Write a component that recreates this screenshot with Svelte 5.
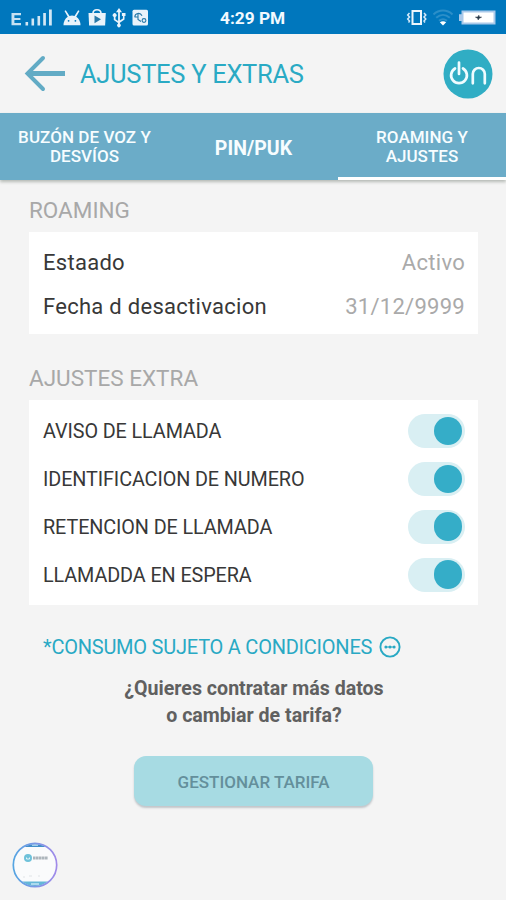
<script>
  const status = [
    { label: 'Estaado', value: 'Activo' },
    { label: 'Fecha d desactivacion', value: '31/12/9999' }
  ];
  let extras = $state([
    { label: 'AVISO DE LLAMADA', on: true },
    { label: 'IDENTIFICACION DE NUMERO', on: true },
    { label: 'RETENCION DE LLAMADA', on: true },
    { label: 'LLAMADDA EN ESPERA', on: true }
  ]);
</script>

<div class="screen">
  <div class="status">
    <svg class="left" width="160" height="34" viewBox="0 0 160 34" fill="#e9f3fb">
      <path d="M12 13h9v2.3h-6.6v2.7h6v2.1h-6v2.9H21v2.2h-9.500v-12.200z" opacity=".85" />
      <path d="M25.500 22h2.600v3.500h-2.600zM31.500 18.500h2.600v7h-2.600zM37.500 16h2.600v9.500h-2.600zM43.200 13h2.700v12.500h-2.700zM49 9.500h2.800v16H49z" opacity=".9" />
      <path d="M63.500 25.200a8.300 10 0 0 1 4.300-8.400L64.500 11l1.300-.7 3.700 5.600a8 8 0 0 1 5 0l3.700-5.600 1.300.7-3.300 5.800a8.300 10 0 0 1 4.300 8.400z" />
      <circle cx="68.600" cy="20.800" r=".9" fill="#0077bd" /><circle cx="75.400" cy="20.800" r=".9" fill="#0077bd" />
      <path d="M88.500 13h17.300l-.7 12.500h-16z" />
      <path d="M93 13.500c0-5 8-5 8 0" fill="none" stroke="#e9f3fb" stroke-width="1.600" />
      <path d="M94.500 15.500l6.500 3.700-6.500 4z" fill="#2778a8" />
      <path d="M119 8l3 4.300h-2.100v8.200l3-2v-2.400h-1V13h3.600v3.100h-1v3.500l-4.600 3.100v1a1.900 1.900 0 1 1-1.900 0v-.7l-4.200-2.900v-3.200a1.900 1.900 0 1 1 1.700 0v2.300l2.600 1.800v-8.700H116z" />
      <rect x="132.500" y="9.800" width="15.500" height="15.600" rx="1.500" />
      <g fill="none" stroke="#2778a8" stroke-width="1.100">
        <path d="M134.800 17c0-4 5.400-5 7.200-1.200M134.500 17h3M138 14v5.500l3 2" />
        <circle cx="144" cy="20.500" r="1.900" />
      </g>
    </svg>
    <span class="time"><span>4:29 PM</span></span>
    <svg class="right" width="106" height="34" viewBox="400 0 106 34" fill="none">
      <rect x="412.500" y="11" width="8.500" height="13" stroke="#edf6fc" stroke-width="2" />
      <path d="M409.500 13l-1.800 2 1.800 2-1.800 2 1.800 2-1 1.500M424 13l1.800 2-1.800 2 1.800 2-1.800 2 1 1.500" stroke="#d5eafa" stroke-width="1.500" />
      <g stroke="#2b8fc9" stroke-width="2">
        <path d="M433.500 14.500c5.500-5.200 13.500-5.200 19 0M436.200 17.700c4.200-3.700 9.400-3.700 13.600 0M439 20.800c2.600-2 5.400-2 8 0" />
      </g>
      <path d="M439.800 22.300c1.800-1.300 4.600-1.300 6.400 0L443 25.500z" fill="#fff" />
      <path d="M461.500 10.500H495.500v14h-34V21H459v-6.800h2.500z" fill="#aac9ea" />
      <path d="M463.500 12.500h30v10h-30z" fill="#fff" />
      <path d="M475.500 17.200l2.500-.2.800-1.700.5 1.700 2.200.2-2.500 1.100-.8 1.600-.5-1.700z" fill="#263646" stroke="#263646" stroke-width=".6" />
    </svg>
  </div>

  <header>
    <svg class="back" width="44" height="40" viewBox="0 0 44 40" fill="none" stroke="#62abc5" stroke-linecap="round">
      <path d="M21 4L5.500 19.500 21 35" stroke-width="4" />
      <path d="M5.500 19.500h37.500" stroke-width="5" stroke-linecap="butt" />
    </svg>
    <h1><span>AJUSTES Y EXTRAS</span></h1>
    <svg class="logo" width="50" height="50" viewBox="0 0 50 50">
      <circle cx="25" cy="25" r="24.500" fill="#30adc4" />
      <g fill="none" stroke="#effcff" stroke-width="2.700" stroke-linecap="round">
        <path d="M12 19.500a7.900 7.900 0 1 0 8 0M16 13.500v11.500" />
        <path d="M29.800 34.300v-9.300a6 6 0 0 1 12 0v9.300" />
      </g>
    </svg>
  </header>

  <nav>
    <button><span>BUZÓN DE VOZ Y<br />DESVÍOS</span></button>
    <button class="big"><span>PIN/PUK</span></button>
    <button class="active"><span>ROAMING Y<br />AJUSTES</span></button>
  </nav>

  <main>
    <h2><span>ROAMING</span></h2>
    <section class="card info">
      {#each status as row}
        <div class="row"><span class="label">{row.label}</span><span class="value">{row.value}</span></div>
      {/each}
    </section>

    <h2 class="second"><span>AJUSTES EXTRA</span></h2>
    <section class="card extras">
      {#each extras as row}
        <div class="row">
          <span class="label">{row.label}</span>
          <button class="toggle" class:off={!row.on} role="switch" aria-checked={row.on} aria-label={row.label} onclick={() => (row.on = !row.on)}><i></i></button>
        </div>
      {/each}
    </section>

    <div class="terms">
      <span>*CONSUMO SUJETO A CONDICIONES</span>
      <svg width="22" height="22" viewBox="0 0 22 22" fill="#29a9c4">
        <circle cx="11" cy="11" r="9.600" fill="none" stroke="#29a9c4" stroke-width="1.900" />
        <circle cx="6.900" cy="11" r="1.500" /><circle cx="11" cy="11" r="1.500" /><circle cx="15.100" cy="11" r="1.500" />
        <path d="M7 10.500h8v1H7z" />
      </svg>
    </div>
    <p>¿Quieres contratar más datos<br />o cambiar de tarifa?</p>
    <button class="cta"><span>GESTIONAR TARIFA</span></button>
  </main>

  <svg class="bubble" width="48" height="48" viewBox="0 0 48 48">
    <defs>
      <linearGradient id="ring"><stop offset="0" stop-color="#55a5e2" /><stop offset="1" stop-color="#a18ae9" /></linearGradient>
      <clipPath id="disc"><circle cx="24" cy="24" r="21" /></clipPath>
    </defs>
    <circle cx="24" cy="24" r="21.500" fill="#fafbfc" />
    <g clip-path="url(#disc)">
      <path d="M0 0h48v6H0z" fill="#438fca" />
      <path d="M0 40.500h48V48H0z" fill="#64b8d8" />
      <path d="M21 4h6M20 43h8" stroke="#c4e5f4" stroke-width="1.500" />
    </g>
    <circle cx="17" cy="17" r="4" fill="#6fc2da" />
    <path d="M15.500 16.500v1.500h3v-1.500" fill="none" stroke="#e4f7fb" />
    <path d="M22 17h15" stroke="#adb6bc" stroke-width="2.800" stroke-dasharray="2.500 .4" />
    <path d="M12 36h2M18 35h3M27 35h2" stroke="#e0e4e7" />
    <circle cx="24" cy="24" r="21.700" fill="none" stroke="url(#ring)" stroke-width="1.700" />
  </svg>
</div>

<style>
  :global(body) { margin: 0; background: #f4f4f4; }
  .screen { position: relative; width: 506px; height: 900px; overflow: hidden; background: #f4f4f4; font-family: Roboto, "Liberation Sans", sans-serif; display: flex; flex-direction: column; }
  .screen * { box-sizing: border-box; }
  button { border: 0; padding: 0; font: inherit; color: inherit; }
  h1, h2, p { margin: 0; font-weight: 400; }
  span { white-space: nowrap; }
  .status { height: 34px; flex: none; background: #0077bd; display: grid; grid-template-columns: 160px 240px 106px; }
  .time { color: #f2faff; font-size: 17.3px; font-weight: 700; line-height: 37px; padding-left: 60px; }
  header { height: 79px; flex: none; display: flex; align-items: center; padding: 0 13px 0 22px; }
  .back { margin-right: 14px; }
  h1 { flex: 1; font-size: 25.5px; letter-spacing: -.3px; line-height: 30px; padding-top: 1px; color: #2aaac4; }
  nav { height: 67px; flex: none; display: grid; grid-template-columns: 169px 169px 168px; background: #6bacc8; box-shadow: 0 2px 3px #b5bab5; }
  nav button { background: none; color: #f7fdff; font-size: 17px; line-height: 19px; font-weight: 500; letter-spacing: .05px; border-bottom: 3px solid transparent; padding-top: 4px; }
  nav .big { font-size: 19.5px; font-weight: 700; padding-top: 6px; }
  nav .active { border-bottom-color: #fff; }
  main { padding: 0 28px 0 29px; display: flex; flex-direction: column; }
  h2 { height: 52px; padding-top: 17px; line-height: 27px; font-size: 22.5px; color: #a8a8a8; }
  .second { height: 66px; padding-top: 31px; }
  .card { background: #fff; padding: 0 13px 0 14px; }
  .info { height: 102px; padding-top: 8px; }
  .info .row { height: 44px; font-size: 22px; letter-spacing: .28px; }
  .row { display: flex; align-items: center; justify-content: space-between; color: #383838; }
  .value { color: #aaa; }
  .extras { height: 205px; padding-top: 7px; }
  .extras .row { height: 47.900px; font-size: 19.8px; letter-spacing: -.1px; }
  .extras .label { padding-top: 2px; }
  .toggle { width: 57px; height: 34px; border-radius: 17px; background: #d9eff3; display: flex; justify-content: flex-end; align-items: center; padding-right: 3px; }
  .toggle.off { justify-content: flex-start; padding-left: 3px; }
  .toggle i { width: 28.500px; height: 28.500px; border-radius: 50%; background: #35adc8; }
  .terms { display: flex; align-items: center; gap: 7px; margin-top: 29px; padding-left: 14px; height: 26px; color: #29a9c4; font-size: 20px; letter-spacing: -.23px; }
  p { text-align: center; color: #606060; font-weight: 700; font-size: 19.6px; line-height: 27px; margin-top: 15px; padding-left: 1px; }
  .cta { align-self: center; width: 239px; height: 50px; margin-top: 27px; border-radius: 12px; background: #a7dbe3; color: #648f9b; font-size: 17px; font-weight: 500; padding-top: 2px; box-shadow: 0 2px 2px #c2c6ca; }
  .bubble { position: absolute; left: 11px; top: 841px; }
</style>
